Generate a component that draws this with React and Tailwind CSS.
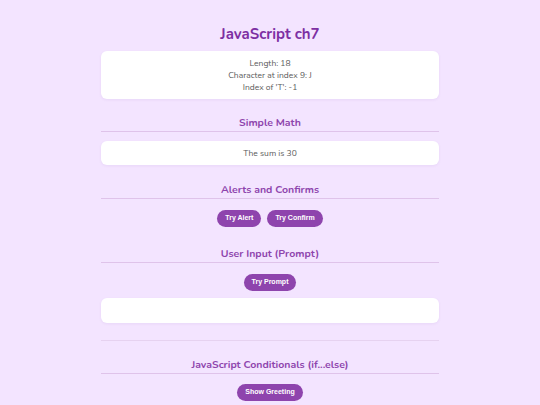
export default function App() {
  const heading = "text-center text-[10.5px] leading-[14px] font-bold text-[#8e44ad] pb-[1px] border-b border-[#dfc3ea]"
  const card = "bg-white rounded-[6px] shadow-[0_1px_3px_rgba(120,60,160,0.08)] text-center text-[8.5px] leading-[12px] text-[#5a5a5a] py-[6px]"
  const btn = "rounded-full bg-[#8e44ad] text-white font-bold text-[7px] h-[17px] px-[8px] font-['Liberation_Sans',Arial,sans-serif]"

  return (
    <div className="min-h-[405px] bg-[#f3e4ff] font-['Nunito','Lato',sans-serif]">
      <div className="w-[338px] mx-auto pt-[24px]">
        <h1 className="text-center text-[15px] leading-[20px] font-bold text-[#7d2fa3]">JavaScript ch7</h1>

        <div className={card + " mt-[7px]"}>
          <p>Length: 18</p>
          <p>Character at index 9: J</p>
          <p>Index of 'T': -1</p>
        </div>

        <h2 className={heading + " mt-[17px]"}>Simple Math</h2>
        <div className={card + " mt-[9px]"}>
          <p>The sum is 30</p>
        </div>

        <h2 className={heading + " mt-[18px]"}>Alerts and Confirms</h2>
        <div className="flex justify-center gap-[6px] mt-[11px]">
          <button className={btn}>Try Alert</button>
          <button className={btn}>Try Confirm</button>
        </div>

        <h2 className={heading + " mt-[20px]"}>User Input (Prompt)</h2>
        <div className="flex justify-center mt-[11px]">
          <button className={btn}>Try Prompt</button>
        </div>
        <div className={card + " mt-[7px] h-[25px]"}></div>

        <hr className="mt-[17px] border-t border-[#e6d2f0]" />

        <h2 className={heading + " mt-[17px]"}>JavaScript Conditionals (if...else)</h2>
        <div className="flex justify-center mt-[10px]">
          <button className={btn}>Show Greeting</button>
        </div>
      </div>
    </div>
  )
}
